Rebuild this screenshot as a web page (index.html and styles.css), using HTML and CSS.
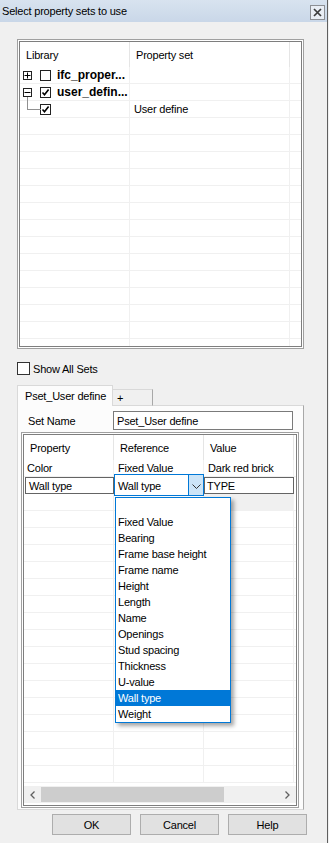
FILE: index.html
```html
<!DOCTYPE html>
<html>
<head>
<meta charset="utf-8">
<link rel="stylesheet" href="styles.css">
</head>
<body>
<div class="window">
  <div class="titlebar">
    <span class="title">Select property sets to use</span>
    <span class="close"><svg width="9" height="9" viewBox="0 0 9 9"><path d="M1 1 L8 8 M8 1 L1 8" stroke="#3c3c3c" stroke-width="1.7"/></svg></span>
  </div>
  <div class="content">
    <div class="frame tree-frame">
      <div class="frame-inner tree">
        <div class="thead">
          <div class="tc c1">Library</div>
          <div class="tc c2">Property set</div>
          <div class="tc c3"></div>
        </div>
        <div class="trow">
          <div class="tc c1">
            <span class="exp"><svg width="7" height="7" viewBox="0 0 7 7"><path d="M0.5 3.5 H6.5 M3.5 0.5 V6.5" stroke="#000" stroke-width="1"/></svg></span>
            <span class="cb"></span>
            <span class="bold">ifc_proper...</span>
          </div>
          <div class="tc c2"></div><div class="tc c3"></div>
        </div>
        <div class="trow">
          <div class="tc c1">
            <span class="exp"><svg width="7" height="7" viewBox="0 0 7 7"><path d="M0.5 3.5 H6.5" stroke="#000" stroke-width="1"/></svg></span>
            <span class="cb"><svg width="9" height="9" viewBox="0 0 9 9"><path d="M1.5 4.5 L3.5 6.8 L7.6 1.6" stroke="#000" stroke-width="1.6" fill="none"/></svg></span>
            <span class="bold">user_defin...</span>
          </div>
          <div class="tc c2"></div><div class="tc c3"></div>
        </div>
        <div class="trow">
          <div class="tc c1">
            <span class="conn"></span>
            <span class="cb"><svg width="9" height="9" viewBox="0 0 9 9"><path d="M1.5 4.5 L3.5 6.8 L7.6 1.6" stroke="#000" stroke-width="1.6" fill="none"/></svg></span>
          </div>
          <div class="tc c2 txt">User define</div><div class="tc c3"></div>
        </div>
        <div class="trow"><div class="tc c1"></div><div class="tc c2"></div><div class="tc c3"></div></div>
        <div class="trow"><div class="tc c1"></div><div class="tc c2"></div><div class="tc c3"></div></div>
        <div class="trow"><div class="tc c1"></div><div class="tc c2"></div><div class="tc c3"></div></div>
        <div class="trow"><div class="tc c1"></div><div class="tc c2"></div><div class="tc c3"></div></div>
        <div class="trow"><div class="tc c1"></div><div class="tc c2"></div><div class="tc c3"></div></div>
        <div class="trow"><div class="tc c1"></div><div class="tc c2"></div><div class="tc c3"></div></div>
        <div class="trow"><div class="tc c1"></div><div class="tc c2"></div><div class="tc c3"></div></div>
        <div class="trow"><div class="tc c1"></div><div class="tc c2"></div><div class="tc c3"></div></div>
        <div class="trow"><div class="tc c1"></div><div class="tc c2"></div><div class="tc c3"></div></div>
        <div class="trow"><div class="tc c1"></div><div class="tc c2"></div><div class="tc c3"></div></div>
        <div class="trow"><div class="tc c1"></div><div class="tc c2"></div><div class="tc c3"></div></div>
        <div class="trow"><div class="tc c1"></div><div class="tc c2"></div><div class="tc c3"></div></div>
        <div class="trow"><div class="tc c1"></div><div class="tc c2"></div><div class="tc c3"></div></div>
        <div class="trow"><div class="tc c1"></div><div class="tc c2"></div><div class="tc c3"></div></div>
      </div>
    </div>

    <div class="show-all"><span class="cb big"></span><span>Show All Sets</span></div>

    <div class="tabs">
      <div class="tab active">Pset_User define</div>
      <div class="tab plus">+</div>
    </div>
    <div class="panel">
      <div class="setname">
        <span class="lbl">Set Name</span>
        <div class="input">Pset_User define</div>
      </div>
      <div class="frame grid-frame">
        <div class="frame-inner grid">
          <div class="ghead">
            <div class="gc g1">Property</div>
            <div class="gc g2">Reference</div>
            <div class="gc g3">Value</div>
            <div class="gc g4"></div>
          </div>
          <div class="gbody">
            <div class="grow">
              <div class="gc g1">Color</div>
              <div class="gc g2">Fixed Value</div>
              <div class="gc g3">Dark red brick</div>
              <div class="gc g4"></div>
            </div>
            <div class="grow edit">
              <div class="gc g1"><div class="ebox wt">Wall type</div></div>
              <div class="gc g2"><div class="combo"><span class="ctext">Wall type</span><span class="cbtn"><svg width="9" height="5" viewBox="0 0 9 5"><path d="M0.5 0.5 L4.5 4.5 L8.5 0.5" stroke="#333" stroke-width="1" fill="none"/></svg></span></div></div>
              <div class="gc g3"><div class="ebox">TYPE</div></div>
              <div class="gc g4"></div>
            </div>
            <div class="grow"><div class="gc g1"></div><div class="gc g2"></div><div class="gc g3 shade"></div><div class="gc g4"></div></div>
            <div class="grow"><div class="gc g1"></div><div class="gc g2"></div><div class="gc g3"></div><div class="gc g4"></div></div>
            <div class="grow"><div class="gc g1"></div><div class="gc g2"></div><div class="gc g3"></div><div class="gc g4"></div></div>
            <div class="grow"><div class="gc g1"></div><div class="gc g2"></div><div class="gc g3"></div><div class="gc g4"></div></div>
            <div class="grow"><div class="gc g1"></div><div class="gc g2"></div><div class="gc g3"></div><div class="gc g4"></div></div>
            <div class="grow"><div class="gc g1"></div><div class="gc g2"></div><div class="gc g3"></div><div class="gc g4"></div></div>
            <div class="grow"><div class="gc g1"></div><div class="gc g2"></div><div class="gc g3"></div><div class="gc g4"></div></div>
            <div class="grow"><div class="gc g1"></div><div class="gc g2"></div><div class="gc g3"></div><div class="gc g4"></div></div>
            <div class="grow"><div class="gc g1"></div><div class="gc g2"></div><div class="gc g3"></div><div class="gc g4"></div></div>
            <div class="grow"><div class="gc g1"></div><div class="gc g2"></div><div class="gc g3"></div><div class="gc g4"></div></div>
            <div class="grow"><div class="gc g1"></div><div class="gc g2"></div><div class="gc g3"></div><div class="gc g4"></div></div>
            <div class="grow"><div class="gc g1"></div><div class="gc g2"></div><div class="gc g3"></div><div class="gc g4"></div></div>
            <div class="grow"><div class="gc g1"></div><div class="gc g2"></div><div class="gc g3"></div><div class="gc g4"></div></div>
            <div class="grow"><div class="gc g1"></div><div class="gc g2"></div><div class="gc g3"></div><div class="gc g4"></div></div>
            <div class="grow"><div class="gc g1"></div><div class="gc g2"></div><div class="gc g3"></div><div class="gc g4"></div></div>
            <div class="grow"><div class="gc g1"></div><div class="gc g2"></div><div class="gc g3"></div><div class="gc g4"></div></div>
            <div class="grow"><div class="gc g1"></div><div class="gc g2"></div><div class="gc g3"></div><div class="gc g4"></div></div>
          </div>
          <div class="hscroll">
            <span class="sbtn"><svg width="5" height="8" viewBox="0 0 5 8"><path d="M4.5 0.5 L1 4 L4.5 7.5" stroke="#606060" stroke-width="1.3" fill="none"/></svg></span>
            <span class="thumb"></span>
            <span class="track"></span>
            <span class="sbtn"><svg width="5" height="8" viewBox="0 0 5 8"><path d="M0.5 0.5 L4 4 L0.5 7.5" stroke="#606060" stroke-width="1.3" fill="none"/></svg></span>
          </div>
        </div>
      </div>
    </div>

    <div class="buttons">
      <div class="btn">OK</div>
      <div class="btn">Cancel</div>
      <div class="btn">Help</div>
    </div>
  </div>

  <div class="dropdown">
    <div class="item"></div>
    <div class="item">Fixed Value</div>
    <div class="item">Bearing</div>
    <div class="item">Frame base height</div>
    <div class="item">Frame name</div>
    <div class="item">Height</div>
    <div class="item">Length</div>
    <div class="item">Name</div>
    <div class="item">Openings</div>
    <div class="item">Stud spacing</div>
    <div class="item">Thickness</div>
    <div class="item">U-value</div>
    <div class="item sel">Wall type</div>
    <div class="item">Weight</div>
  </div>
</div>
</body>
</html>
```

FILE: styles.css
```css
* { box-sizing: border-box; }
html, body { margin: 0; padding: 0; }
body {
  width: 329px;
  height: 843px;
  overflow: hidden;
  background: #f0f0f0;
  font-family: "Liberation Sans", Arial, sans-serif;
  font-size: 11px;
  letter-spacing: -0.2px;
  color: #000;
}
.window {
  position: relative;
  width: 328px;
  height: 843px;
  border-right: 1px solid #5f5f5f;
}
.titlebar {
  height: 22px;
  background: linear-gradient(#d8e3ef, #c9d7e8);
  display: flex;
  align-items: center;
  justify-content: space-between;
  padding: 0 2px 0 2px;
}
.title { font-size: 11px; }
.close {
  width: 15px;
  height: 15px;
  margin-top: 3px;
  border: 1px solid #8c8f94;
  background: #e9eef5;
  display: flex;
  align-items: center;
  justify-content: center;
}
.content { padding: 17px 0 0 17px; }

.frame {
  border: 1px solid #a0a0a0;
  padding: 1px;
  background: #fff;
}
.frame-inner {
  height: 100%;
  border: 1px solid #7e7e7e;
  background: #fff;
  overflow: hidden;
}
.tree-frame { width: 287px; height: 310px; }
.thead { height: 25px; display: flex; }
.thead .tc { border-right: 1px solid #e5e5e5; }
.tc {
  display: flex;
  align-items: center;
  padding-left: 6px;
  border-right: 1px solid #f0f0f0;
  height: 100%;
}
.c1 { width: 110px; flex: none; }
.c2 { width: 160px; flex: none; }
.c3 { flex: 1; border-right: none; }
.thead .c3 { border-right: none; }
.trow {
  height: 17px;
  display: flex;
  border-bottom: 1px solid #f0f0f0;
}
.trow .c1 { padding-left: 3px; }
.trow .c2 { padding-left: 4px; }
.exp {
  width: 9px;
  height: 9px;
  border: 1px solid #222;
  display: flex;
  align-items: center;
  justify-content: center;
  background: #fff;
  flex: none;
}
.cb {
  width: 11px;
  height: 11px;
  border: 1px solid #222;
  background: #fff;
  display: flex;
  align-items: center;
  justify-content: center;
  margin-left: 8px;
  flex: none;
}
.bold {
  font-weight: bold;
  font-size: 12px;
  letter-spacing: 0;
  margin-left: 6px;
  white-space: nowrap;
}
.conn {
  position: relative;
  width: 17px;
  height: 100%;
  flex: none;
}
.conn::before {
  content: "";
  position: absolute;
  left: 4px;
  top: -4px;
  width: 13px;
  height: 12px;
  border-left: 1px solid #909090;
  border-bottom: 1px solid #909090;
}
.trow .conn + .cb { margin-left: 0; }

.show-all {
  display: flex;
  align-items: center;
  height: 13px;
  margin-top: 13px;
}
.cb.big { width: 13px; height: 13px; margin-left: 0; border-color: #333; }
.show-all span + span { margin-left: 3px; }

.tabs {
  display: flex;
  align-items: flex-end;
  height: 20px;
  margin-top: 11px;
  position: relative;
  z-index: 1;
  margin-bottom: -1px;
}
.tab {
  border: 1px solid #d9d9d9;
  border-bottom: none;
  display: flex;
  align-items: center;
}
.tab.active {
  width: 96px;
  height: 21px;
  background: #fcfcfc;
  padding-left: 7px;
  border-color: #d9d9d9;
}
.tab.plus {
  width: 40px;
  height: 17px;
  background: #f0f0f0;
  padding-left: 4px;
  border-left: none;
  border-right-color: #a8a8a8;
  border-bottom: 1px solid #d9d9d9;
}
.panel {
  width: 287px;
  height: 405px;
  border: 1px solid #d9d9d9;
  border-right-color: #a8a8a8;
  background: #fcfcfc;
  padding: 5px 4px 1px 3px;
}
.setname {
  display: flex;
  align-items: center;
  height: 19px;
}
.lbl { width: 92px; padding-left: 7px; }
.input {
  width: 180px;
  height: 19px;
  border: 1px solid #7a7a7a;
  background: #fff;
  display: flex;
  align-items: center;
  padding-left: 3px;
}
.grid-frame { width: 278px; height: 376px; margin-top: 2px; }
.grid { display: flex; flex-direction: column; }
.ghead { height: 25px; display: flex; flex: none; }
.gc {
  height: 100%;
  display: flex;
  align-items: center;
  border-right: 1px solid #f0f0f0;
  padding-left: 3px;
  flex: none;
}
.ghead .gc { border-right-color: #e5e5e5; padding-left: 6px; }
.g1 { width: 90px; }
.g2 { width: 90px; padding-left: 4px; }
.g3 { width: 90px; padding-left: 4px; }
.g4 { flex: 1; border-right: none; }
.gbody { flex: 1; overflow: hidden; }
.grow {
  height: 17px;
  display: flex;
  border-bottom: 1px solid #f0f0f0;
}
.grow.edit { border-bottom: none; }
.grow.edit .gc { padding: 0; border-right: none; align-items: stretch; }
.ebox {
  flex: 1;
  border: 1px solid #646464;
  display: flex;
  align-items: center;
  padding-left: 2px;
  background: #fff;
}
.ebox.wt { margin-left: 1px; padding-left: 3px; }
.combo {
  flex: 1;
  margin: -3px 0 -2px;
  border: 1px solid #0078d7;
  background: #fff;
  display: flex;
  align-items: center;
  position: relative;
  z-index: 2;
}
.ctext { flex: 1; padding-left: 3px; padding-top: 2px; }
.cbtn {
  width: 15px;
  height: 100%;
  background: #cce4f7;
  border-left: 1px solid #0078d7;
  display: flex;
  align-items: center;
  justify-content: center;
  padding-top: 2px;
}
.shade { background: #f0f0f0; }
.hscroll {
  height: 17px;
  margin-bottom: 2px;
  display: flex;
  background: #f0f0f0;
  flex: none;
}
.sbtn {
  width: 17px;
  display: flex;
  align-items: center;
  justify-content: center;
  flex: none;
}
.thumb {
  width: 183px;
  margin: 1px 0;
  background: #cdcdcd;
  flex: none;
}
.track { flex: 1; }

.buttons {
  display: flex;
  gap: 9px;
  margin-top: 4px;
  padding-left: 35px;
}
.btn {
  width: 79px;
  height: 21px;
  border: 1px solid #adadad;
  background: #e1e1e1;
  display: flex;
  align-items: center;
  justify-content: center;
}

.dropdown {
  position: absolute;
  left: 115px;
  top: 497px;
  width: 116px;
  height: 226px;
  border: 1px solid #0078d7;
  background: #fff;
  box-shadow: 3px 3px 4px rgba(0, 0, 0, 0.35);
  z-index: 5;
}
.item {
  height: 16px;
  line-height: 16px;
  padding-left: 2px;
  white-space: nowrap;
}
.item.sel { background: #0078d7; color: #fff; }
```
